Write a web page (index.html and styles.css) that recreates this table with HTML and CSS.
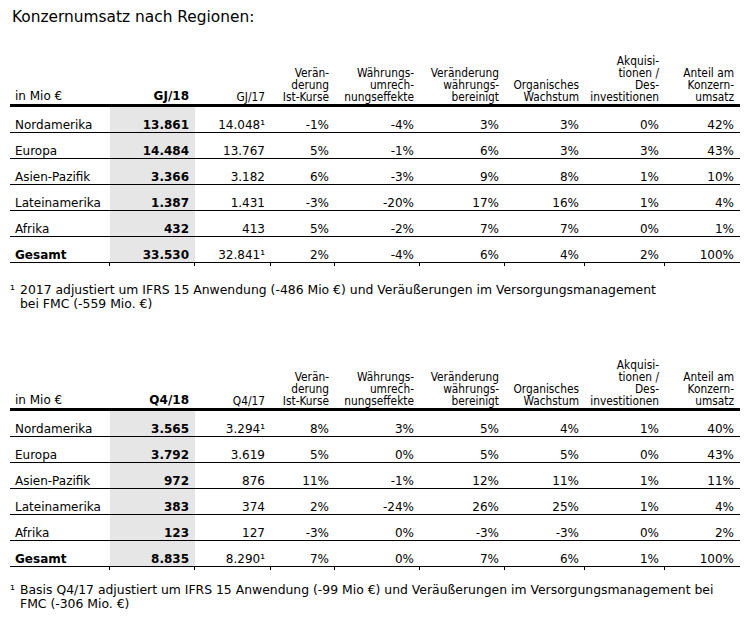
FILE: index.html
```html
<!DOCTYPE html>
<html lang="de">
<head>
<meta charset="utf-8">
<title>Konzernumsatz nach Regionen</title>
<link rel="stylesheet" href="styles.css">
</head>
<body>
<div class="page">
  <h1 class="title">Konzernumsatz nach Regionen:</h1>

  <table class="rev rev-first">
    <colgroup>
      <col class="w-lbl"><col class="w-85"><col class="w-76"><col class="w-64"><col class="w-85"><col class="w-85"><col class="w-80"><col class="w-80"><col class="w-75">
    </colgroup>
    <thead>
      <tr>
        <th class="lbl">in Mio €</th>
        <th class="cur">GJ/18</th>
        <th>GJ/17</th>
        <th>Verän-<br>derung<br>Ist-Kurse</th>
        <th>Währungs-<br>umrech-<br>nungseffekte</th>
        <th>Veränderung<br>währungs-<br>bereinigt</th>
        <th>Organisches<br>Wachstum</th>
        <th>Akquisi-<br>tionen /<br>Des-<br>investitionen</th>
        <th>Anteil am<br>Konzern-<br>umsatz</th>
      </tr>
    </thead>
    <tbody>
      <tr><td class="lbl">Nordamerika</td><td class="cur">13.861</td><td>14.048<span class="sup">¹</span></td><td>-1%</td><td>-4%</td><td>3%</td><td>3%</td><td>0%</td><td>42%</td></tr>
      <tr><td class="lbl">Europa</td><td class="cur">14.484</td><td>13.767</td><td>5%</td><td>-1%</td><td>6%</td><td>3%</td><td>3%</td><td>43%</td></tr>
      <tr><td class="lbl">Asien-Pazifik</td><td class="cur">3.366</td><td>3.182</td><td>6%</td><td>-3%</td><td>9%</td><td>8%</td><td>1%</td><td>10%</td></tr>
      <tr><td class="lbl">Lateinamerika</td><td class="cur">1.387</td><td>1.431</td><td>-3%</td><td>-20%</td><td>17%</td><td>16%</td><td>1%</td><td>4%</td></tr>
      <tr><td class="lbl">Afrika</td><td class="cur">432</td><td>413</td><td>5%</td><td>-2%</td><td>7%</td><td>7%</td><td>0%</td><td>1%</td></tr>
      <tr class="total"><td class="lbl">Gesamt</td><td class="cur">33.530</td><td>32.841<span class="sup">¹</span></td><td>2%</td><td>-4%</td><td>6%</td><td>4%</td><td>2%</td><td>100%</td></tr>
    </tbody>
  </table>

  <p class="note note-first"><span class="mark">¹</span>2017 adjustiert um IFRS 15 Anwendung (-486 Mio €) und Veräußerungen im Versorgungsmanagement<br>bei FMC (-559 Mio. €)</p>

  <table class="rev rev-second">
    <colgroup>
      <col class="w-lbl"><col class="w-85"><col class="w-76"><col class="w-64"><col class="w-85"><col class="w-85"><col class="w-80"><col class="w-80"><col class="w-75">
    </colgroup>
    <thead>
      <tr>
        <th class="lbl">in Mio €</th>
        <th class="cur">Q4/18</th>
        <th>Q4/17</th>
        <th>Verän-<br>derung<br>Ist-Kurse</th>
        <th>Währungs-<br>umrech-<br>nungseffekte</th>
        <th>Veränderung<br>währungs-<br>bereinigt</th>
        <th>Organisches<br>Wachstum</th>
        <th>Akquisi-<br>tionen /<br>Des-<br>investitionen</th>
        <th>Anteil am<br>Konzern-<br>umsatz</th>
      </tr>
    </thead>
    <tbody>
      <tr><td class="lbl">Nordamerika</td><td class="cur">3.565</td><td>3.294<span class="sup">¹</span></td><td>8%</td><td>3%</td><td>5%</td><td>4%</td><td>1%</td><td>40%</td></tr>
      <tr><td class="lbl">Europa</td><td class="cur">3.792</td><td>3.619</td><td>5%</td><td>0%</td><td>5%</td><td>5%</td><td>0%</td><td>43%</td></tr>
      <tr><td class="lbl">Asien-Pazifik</td><td class="cur">972</td><td>876</td><td>11%</td><td>-1%</td><td>12%</td><td>11%</td><td>1%</td><td>11%</td></tr>
      <tr><td class="lbl">Lateinamerika</td><td class="cur">383</td><td>374</td><td>2%</td><td>-24%</td><td>26%</td><td>25%</td><td>1%</td><td>4%</td></tr>
      <tr><td class="lbl">Afrika</td><td class="cur">123</td><td>127</td><td>-3%</td><td>0%</td><td>-3%</td><td>-3%</td><td>0%</td><td>2%</td></tr>
      <tr class="total"><td class="lbl">Gesamt</td><td class="cur">8.835</td><td>8.290<span class="sup">¹</span></td><td>7%</td><td>0%</td><td>7%</td><td>6%</td><td>1%</td><td>100%</td></tr>
    </tbody>
  </table>

  <p class="note note-second"><span class="mark">¹</span>Basis Q4/17 adjustiert um IFRS 15 Anwendung (-99 Mio €) und Veräußerungen im Versorgungsmanagement bei<br>FMC (-306 Mio. €)</p>
</div>
</body>
</html>
```

FILE: styles.css
```css
html, body {
  margin: 0;
  padding: 0;
  background: #ffffff;
}

body {
  font-family: "DejaVu Sans", Verdana, sans-serif;
  color: #000000;
}

.page {
  width: 756px;
  padding-top: 8px;
}

.title {
  margin: 0 0 0 12px;
  font-family: "DejaVu Sans", Verdana, sans-serif;
  font-size: 15.4px;
  line-height: 18px;
  font-weight: normal;
}

.rev {
  margin-left: 10px;
  width: 730px;
  table-layout: fixed;
  border-collapse: collapse;
  border-spacing: 0;
}

.rev-first {
  margin-top: 29px;
}

.rev-second {
  margin-top: 48px;
}

.w-lbl { width: 100px; }
.w-85 { width: 85px; }
.w-76 { width: 76px; }
.w-64 { width: 64px; }
.w-80 { width: 80px; }
.w-75 { width: 75px; }

.rev th {
  font-family: "DejaVu Sans Condensed", "Liberation Sans", sans-serif;
  font-size: 11.8px;
  line-height: 12px;
  font-weight: normal;
  text-align: right;
  vertical-align: bottom;
  padding: 0 6px 1px 0;
  border-bottom: 3px solid #000000;
  white-space: nowrap;
}

.rev th.lbl {
  font-family: "DejaVu Sans", Verdana, sans-serif;
  font-size: 12px;
  line-height: 14px;
  text-align: left;
  padding-left: 5px;
}

.rev th.cur {
  font-family: "DejaVu Sans", Verdana, sans-serif;
  font-size: 12px;
  line-height: 14px;
  font-weight: bold;
}

.rev td {
  font-size: 12px;
  line-height: 14px;
  text-align: right;
  padding: 11px 6px 0 0;
  border-bottom: 1px solid #000000;
  white-space: nowrap;
}

.rev td.lbl {
  text-align: left;
  padding-left: 5px;
}

.rev td.cur {
  background: #e6e6e6;
  font-weight: bold;
}

.rev tr.total td.lbl {
  font-weight: bold;
}

.rev tr.total td {
  position: relative;
}

.rev tr.total td:not(.lbl)::after {
  content: "";
  position: absolute;
  left: -1px;
  bottom: -4px;
  width: 1px;
  height: 4px;
  background: #000000;
}

.sup {
  font-size: 12px;
}

.note {
  margin: 0;
  padding-left: 20px;
  font-size: 12.4px;
  line-height: 14px;
}

.note-first {
  margin-top: 20px;
}

.note-second {
  margin-top: 16px;
}

.mark {
  display: inline-block;
  width: 10px;
  margin-left: -10px;
}
```
